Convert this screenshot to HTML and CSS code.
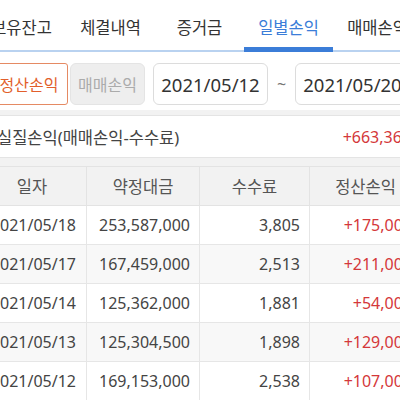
FILE: index.html
```html
<!DOCTYPE html>
<html lang="ko">
<head>
<meta charset="utf-8">
<link rel="stylesheet" href="styles.css">
</head>
<body>
<div class="page">
  <nav class="tabs">
    <div class="tab">보유잔고</div>
    <div class="tab">체결내역</div>
    <div class="tab">증거금</div>
    <div class="tab active">일별손익</div>
    <div class="tab">매매손익</div>
  </nav>
  <div class="filters">
    <div class="seg seg-on">정산손익</div>
    <div class="seg seg-off">매매손익</div>
    <div class="date">2021/05/12</div>
    <div class="tilde">~</div>
    <div class="date">2021/05/20</div>
  </div>
  <div class="summary">
    <span class="summary-label">실질손익(매매손익-수수료)</span>
    <span class="summary-value">+663,365</span>
  </div>
  <table class="grid">
    <colgroup>
      <col class="c1"><col class="c2"><col class="c3"><col class="c4">
    </colgroup>
    <thead>
      <tr><th>일자</th><th>약정대금</th><th>수수료</th><th>정산손익</th></tr>
    </thead>
    <tbody>
      <tr><td>2021/05/18</td><td>253,587,000</td><td>3,805</td><td class="plus">+175,000</td></tr>
      <tr><td>2021/05/17</td><td>167,459,000</td><td>2,513</td><td class="plus">+211,000</td></tr>
      <tr><td>2021/05/14</td><td>125,362,000</td><td>1,881</td><td class="plus">+54,000</td></tr>
      <tr><td>2021/05/13</td><td>125,304,500</td><td>1,898</td><td class="plus">+129,000</td></tr>
      <tr><td>2021/05/12</td><td>169,153,000</td><td>2,538</td><td class="plus">+107,000</td></tr>
    </tbody>
  </table>
</div>
</body>
</html>
```
FILE: styles.css
```css
html, body {
  margin: 0;
  padding: 0;
}
body {
  background: #f2f2f2;
  overflow: hidden;
  font-family: "Noto Sans", "Noto Sans CJK KR", sans-serif;
  color: #444;
}
.page {
  width: 445px;
  margin-left: -23px;
}
.tabs {
  display: flex;
  height: 52px;
  background: #fff;
  box-shadow: inset 0 -2px 0 #b9d2f0;
}
.tab {
  flex: 0 0 89px;
  display: flex;
  align-items: center;
  justify-content: center;
  padding-top: 1px;
  box-sizing: border-box;
  font-size: 16.5px;
  color: #333;
}
.tab.active {
  color: #3b7dd8;
  box-shadow: inset 0 -5px 0 #3b7dd8;
}
.filters {
  display: flex;
  align-items: center;
  background: #fff;
  padding: 11px 0 5px 13px;
}
.seg {
  height: 42px;
  box-sizing: border-box;
  display: flex;
  align-items: center;
  justify-content: center;
  font-size: 16px;
}
.seg-on {
  width: 78px;
  border: 1px solid #e58a63;
  border-radius: 3px;
  color: #e25f2c;
  background: #fff;
}
.seg-off {
  width: 75px;
  margin-left: 2px;
  border: 1px solid #e4e4e4;
  border-radius: 6px;
  background: #eeeeee;
  color: #ababab;
}
.date {
  width: 115px;
  height: 42px;
  box-sizing: border-box;
  margin-left: 8px;
  border: 1px solid #dcdcdc;
  border-radius: 6px;
  display: flex;
  align-items: center;
  justify-content: center;
  font-size: 18.5px;
  color: #333;
}
.tilde {
  width: 27px;
  text-align: center;
  font-size: 16px;
  color: #777;
}
.tilde + .date {
  margin-left: 0;
}
.summary {
  margin-top: 5px;
  height: 43px;
  box-sizing: border-box;
  background: #fff;
  border-top: 1px solid #e4e4e4;
  border-bottom: 1px solid #e4e4e4;
  display: flex;
  align-items: center;
  justify-content: space-between;
  padding: 0 11px 0 20px;
  font-size: 16.5px;
}
.summary-label {
  color: #444;
}
.summary-value {
  color: #d4373a;
  font-size: 16px;
}
.grid {
  margin-top: 8px;
  width: 444px;
  border-collapse: collapse;
  table-layout: fixed;
  background: #fff;
  font-size: 16px;
}
.c1 { width: 109px; }
.c2 { width: 113px; }
.c3 { width: 110px; }
.c4 { width: 112px; }
.grid th {
  height: 38px;
  padding: 0;
  background: #f2f2f2;
  font-weight: normal;
  font-size: 16.5px;
  color: #555;
  border: 1px solid #e3e3e3;
  text-align: center;
}
.grid td {
  height: 38px;
  padding: 0 9px 0 0;
  text-align: right;
  border: 1px solid #e6e6e6;
  color: #444;
}
.grid tbody tr:nth-child(even) td {
  background: #f8f8f8;
}
.grid td:first-child {
  padding-right: 10px;
}
.grid td.plus {
  color: #d4373a;
}
```
